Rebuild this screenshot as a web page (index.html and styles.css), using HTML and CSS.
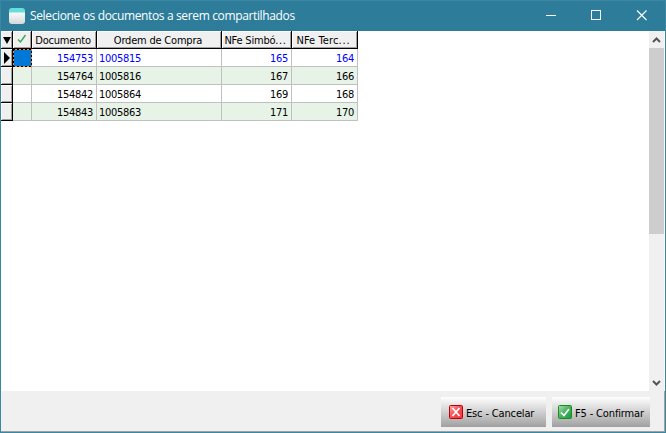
FILE: index.html
```html
<!DOCTYPE html>
<html lang="pt-BR">
<head>
<meta charset="utf-8">
<title>Selecione os documentos a serem compartilhados</title>
<link rel="stylesheet" href="styles.css">
</head>
<body>
<div class="window">
  <header class="titlebar">
    <span class="app-icon"></span>
    <span class="title">Selecione os documentos a serem compartilhados</span>
    <div class="controls">
      <svg width="45" height="30" shape-rendering="crispEdges"><path d="M16 14.500h10" stroke="#fff"/></svg>
      <svg width="45" height="30" shape-rendering="crispEdges"><rect x="16.500" y="9.500" width="9" height="9" fill="none" stroke="#fff"/></svg>
      <svg width="45" height="30"><path d="M17 9.500l9.500 9.500M26.500 9.500l-9.500 9.500" stroke="#fff" stroke-width="1.100"/></svg>
    </div>
  </header>
  <main class="content">
    <div class="grid">
      <div class="row head">
        <div class="cell mark"><svg width="11" height="17"><path d="M2 6h8L6 13z"/></svg></div>
        <div class="cell"><svg width="18" height="17"><path d="M5 8.500l2.500 2.500 5-7" fill="none" stroke="#36a852" stroke-width="1.400"/></svg></div>
        <div class="cell">Documento</div>
        <div class="cell">Ordem de Compra</div>
        <div class="cell">NFe Simbó<span class="dots">...</span></div>
        <div class="cell wide">NFe Terc<span class="dots">...</span></div>
      </div>
      <div class="row current">
        <div class="cell mark"><svg width="11" height="17"><path d="M3 3v12l6-6z"/></svg></div>
        <div class="cell focus"></div><div class="cell num">154753</div><div class="cell">1005815</div><div class="cell num">165</div><div class="cell num">164</div>
      </div>
      <div class="row alt">
        <div class="cell mark"></div><div class="cell"></div><div class="cell num">154764</div><div class="cell">1005816</div><div class="cell num">167</div><div class="cell num">166</div>
      </div>
      <div class="row">
        <div class="cell mark"></div><div class="cell"></div><div class="cell num">154842</div><div class="cell">1005864</div><div class="cell num">169</div><div class="cell num">168</div>
      </div>
      <div class="row alt">
        <div class="cell mark"></div><div class="cell"></div><div class="cell num">154843</div><div class="cell">1005863</div><div class="cell num">171</div><div class="cell num">170</div>
      </div>
    </div>
    <div class="scrollbar">
      <svg width="15" height="17"><path d="M4 11l3.500-3.500L11 11" fill="none" stroke="#555" stroke-width="2"/></svg>
      <div class="thumb"></div>
      <svg class="down" width="15" height="17"><path d="M4 7l3.500 3.500L11 7" fill="none" stroke="#555" stroke-width="2"/></svg>
    </div>
  </main>
  <footer class="footer">
    <button class="btn cancel">
      <svg width="14" height="14"><defs><linearGradient id="r" x1="0" y1="0" x2="1" y2="1"><stop offset="0" stop-color="#ffaaaa"/><stop offset=".5" stop-color="#f05055"/><stop offset="1" stop-color="#ff3030"/></linearGradient></defs><rect x=".5" y=".5" width="13" height="13" rx="1" fill="url(#r)" stroke="#b80010"/><path d="M3.500 3l7 8M10.500 3l-7 8" stroke="#fff" stroke-width="1.700"/></svg>
      <span>Esc - Cancelar</span>
    </button>
    <button class="btn confirm">
      <svg width="14" height="14"><defs><linearGradient id="g" x1="0" y1="0" x2="1" y2="1"><stop offset="0" stop-color="#b0dcb8"/><stop offset=".5" stop-color="#48b060"/><stop offset="1" stop-color="#189c40"/></linearGradient></defs><rect x=".5" y=".5" width="13" height="13" rx="1" fill="url(#g)" stroke="#149018"/><path d="M3 7.500l3 3 5-6.500" fill="none" stroke="#fff" stroke-width="1.700"/></svg>
      <span>F5 - Confirmar</span>
    </button>
  </footer>
</div>
</body>
</html>
```
FILE: styles.css
```css
* { box-sizing: border-box; }
body { margin: 0; }
.window {
  width: 666px; height: 433px;
  display: flex; flex-direction: column;
  border: 1px solid #3b87a3;
  background: #fff;
  font: 11px "DejaVu Sans Condensed", "DejaVu Sans", sans-serif;
  font-stretch: condensed;
  letter-spacing: -0.3px;
  color: #000;
  overflow: hidden;
}
.titlebar { height: 30px; flex: none; background: #2d7d9a; display: flex; align-items: center; padding-left: 8px; }
.app-icon { width: 16px; height: 16px; border-radius: 3px; background: linear-gradient(#66dfdc 0 4px, #f8f8f8 5px, #d5d8da 100%); }
.title { margin-left: 5px; font: 12px/16px "Open Sans", sans-serif; letter-spacing: -0.36px; color: #fff; white-space: nowrap; }
.controls { margin-left: auto; display: flex; height: 30px; }
.content { flex: 1; display: flex; justify-content: space-between; min-height: 0; }
.grid { width: 357px; }
.row { display: grid; grid-template-columns: 12px 19px 65px 125px 70px 66px; height: 18px; }
.cell { height: 18px; border-right: 1px solid #c0c0c0; border-bottom: 1px solid #c0c0c0; padding: 0 2px; line-height: 19px; white-space: nowrap; overflow: hidden; }
.num { text-align: right; padding-right: 3px; }
.alt .cell { background: #e7f3e7; }
.current { color: #0000ff; }
.head .cell, .row .mark { background: #f0f0f0; border-color: #000; padding: 0; box-shadow: inset 1px 1px #fff, inset -1px -1px #a0a0a0; }
.head .cell { text-align: center; letter-spacing: -0.2px; }
.head .cell:nth-child(n+3) { padding-right: 2px; }
.head .dots { letter-spacing: 0.6px; }
.head .wide { letter-spacing: 0.1px; }
.head .wide .dots { letter-spacing: 0.9px; }
.cell svg { display: block; }
.row .focus {
  border: 0; padding: 1px;
  background: linear-gradient(#0078d7, #0078d7) content-box, repeating-conic-gradient(#ff8728 0 25%, #000 0 50%) 0 0 / 4px 4px;
}
.row .focus::before { content: ""; display: block; height: 16px; background: #0078d7; }
.scrollbar { width: 16px; background: #f0f0f0; border-right: 1px solid #fff; display: flex; flex-direction: column; }
.thumb { height: 186px; background: #cdcdcd; }
.down { margin-top: auto; }
.scrollbar svg { display: block; flex: none; }
.footer { height: 41px; flex: none; background: #f0f0f0; border-right: 1px solid #a0a0a0; border-bottom: 1px solid #a0a0a0; display: flex; justify-content: flex-end; gap: 6px; padding: 6px 14px 0 0; }
.btn { height: 30px; border: 0; padding: 2px 0 0; background: linear-gradient(#fff, #a0a0a0); font: inherit; color: #000; display: flex; align-items: center; white-space: nowrap; letter-spacing: -0.15px; }
.btn svg { margin-top: -2px; }
.cancel { width: 105px; padding-left: 8px; gap: 3px; }
.confirm { width: 98px; padding-left: 6px; gap: 3px; }
```
